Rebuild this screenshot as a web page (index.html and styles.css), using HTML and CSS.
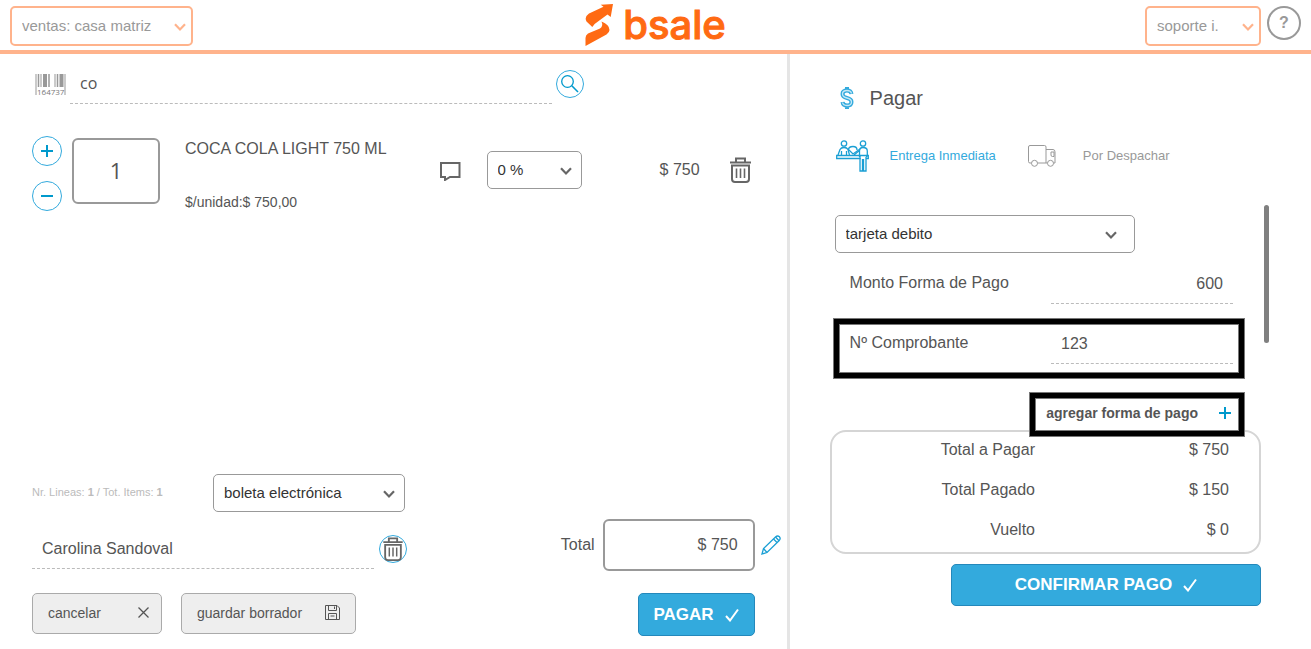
FILE: index.html
```
<!DOCTYPE html>
<html lang="es">
<head>
    <meta charset="UTF-8">
    <meta name="viewport" content="width=device-width, initial-scale=1.0">
    <title>bsale - Ventas</title>
    <link rel="stylesheet" href="styles.css">
</head>
<body>
    <!-- Shared icons -->
    <svg class="sprite" aria-hidden="true">
        <symbol id="chevron" viewBox="0 0 12 8">
            <path d="M1 1.2 L6 6.4 L11 1.2" fill="none" stroke="currentColor" stroke-width="2.2"/>
        </symbol>
        <symbol id="trash" viewBox="0 0 21 26">
            <g fill="none" stroke="currentColor" stroke-width="2">
                <path d="M0 5.5 H21 M6 5 V1.5 H15 V5"/>
                <path d="M2 8.5 H19 V22 Q19 25 16 25 H5 Q2 25 2 22 Z"/>
                <path d="M6.5 11.5 V21 M10.5 11.5 V21 M14.5 11.5 V21" stroke-width="1.6"/>
            </g>
        </symbol>
        <symbol id="check" viewBox="0 0 14 14">
            <path d="M1 8 L5 12.5 L13 1.5" fill="none" stroke="currentColor" stroke-width="2"/>
        </symbol>
        <symbol id="plus" viewBox="0 0 12 12">
            <path d="M6 0 V12 M0 6 H12" fill="none" stroke="currentColor" stroke-width="2"/>
        </symbol>
    </svg>

    <header class="topbar">
        <div class="select select-orange select-branch">
            <select aria-label="Sucursal">
                <option>ventas: casa matriz</option>
            </select>
            <svg class="chevron"><use href="#chevron"/></svg>
        </div>

        <a class="logo" href="#">
            <svg class="logo-mark" viewBox="0 0 28 42" aria-hidden="true">
                <path fill="#ff6a13" d="M28 0 L25.7 13 L22.5 10.500 L15 16 Q9.500 19.500 7.300 23 L1.500 17.500 Q-1 13 4 9.500 L18.500 2.700 L15.700 .7 Z"/>
                <path fill="#ff6a13" d="M16.500 17.500 Q24.500 20.500 24.500 26 Q24.500 28.500 21.500 30.500 L.5 42 V34 Q.5 31 3 29.500 L15 24.500 Q18.500 22 16.500 17.500 Z"/>
            </svg>
            <span class="logo-text">bsale</span>
        </a>

        <div class="topbar-user">
            <div class="select select-orange select-user">
                <select aria-label="Usuario">
                    <option>soporte i.</option>
                </select>
                <svg class="chevron"><use href="#chevron"/></svg>
            </div>
            <button class="help" type="button" aria-label="Ayuda">?</button>
        </div>
    </header>

    <main class="layout">
        <!-- Sale detail -->
        <section class="sale">
            <div class="search">
                <svg class="barcode" viewBox="0 0 31 22" aria-hidden="true">
                    <path stroke="#bbb" stroke-width="1.500" d="M1 0 V21 M6 0 V13 M20 0 V13 M30 0 V21"/>
                    <path stroke="#999" stroke-width="1.500" d="M3.500 0 V13 M14 0 V13 M22.500 0 V13"/>
                    <path stroke="#999" stroke-width="4" d="M10 0 V13 M26.500 0 V13"/>
                    <text x="2" y="21" font-size="8" fill="#777">164737</text>
                </svg>
                <input class="line-input search-input" type="text" value="co" aria-label="Buscar producto">
                <button class="round round-small" type="button" aria-label="Buscar">
                    <svg width="18" height="18" viewBox="0 0 18 18" fill="none" stroke="currentColor">
                        <circle cx="6.500" cy="6.500" r="5.800" stroke-width="1.300"/>
                        <path d="M10.800 10.800 L17 17" stroke-width="1.600"/>
                    </svg>
                </button>
            </div>

            <div class="item">
                <div class="stepper">
                    <button class="round" type="button" aria-label="Sumar">
                        <svg width="12" height="12"><use href="#plus"/></svg>
                    </button>
                    <button class="round" type="button" aria-label="Restar">
                        <svg width="12" height="12" viewBox="0 0 12 12"><path d="M0 6 H12" stroke="currentColor" stroke-width="2"/></svg>
                    </button>
                </div>
                <input class="quantity" type="text" value="1" aria-label="Cantidad">
                <div class="item-text">
                    <span class="item-name">COCA COLA LIGHT 750 ML</span>
                    <span class="item-unit">$/unidad:$ 750,00</span>
                </div>
                <div class="item-actions">
                    <button class="icon-button comment" type="button" aria-label="Comentario">
                        <svg width="21" height="21" viewBox="0 0 21 21">
                            <path d="M1 3 H19.500 V17 H10 L5 20 V17 H1 Z" fill="none" stroke="currentColor" stroke-width="2"/>
                        </svg>
                    </button>
                    <div class="select select-discount">
                        <select aria-label="Descuento">
                            <option>0 %</option>
                        </select>
                        <svg class="chevron"><use href="#chevron"/></svg>
                    </div>
                    <span class="item-price">$ 750</span>
                    <button class="icon-button" type="button" aria-label="Eliminar">
                        <svg width="21" height="26"><use href="#trash"/></svg>
                    </button>
                </div>
            </div>

            <div class="sale-footer">
                <div class="document">
                    <span class="counter">Nr. Lineas: <b>1</b> / Tot. Items: <b>1</b></span>
                    <div class="select select-document">
                        <select aria-label="Tipo de documento">
                            <option>boleta electrónica</option>
                        </select>
                        <svg class="chevron"><use href="#chevron"/></svg>
                    </div>
                </div>

                <div class="customer-row">
                    <div class="customer">
                        <input class="line-input customer-input" type="text" value="Carolina Sandoval" aria-label="Cliente">
                        <button class="round round-small customer-remove" type="button" aria-label="Quitar cliente">
                            <svg width="20" height="24"><use href="#trash"/></svg>
                        </button>
                    </div>
                    <div class="total">
                        <label for="total">Total</label>
                        <input id="total" type="text" value="$ 750">
                        <button class="icon-button edit" type="button" aria-label="Editar total">
                            <svg width="20" height="20" viewBox="0 0 20 20" fill="none" stroke="currentColor" stroke-width="1.300">
                                <path d="M1 19 L2.500 13.500 L14.500 2 Q16.500 .200 18.500 1.800 Q20 3.800 18 5.800 L6 17.500 Z"/>
                                <path d="M2.500 13.500 L6 17.500 M12.500 4 L16 7.500 M14.500 2 L18 5.800"/>
                            </svg>
                        </button>
                    </div>
                </div>

                <div class="buttons">
                    <button class="btn btn-gray btn-cancel" type="button">
                        cancelar
                        <svg width="11" height="11" viewBox="0 0 11 11"><path d="M.5 .5 L10.500 10.500 M10.500 .5 L.5 10.500" stroke="currentColor" stroke-width="1.300"/></svg>
                    </button>
                    <button class="btn btn-gray btn-draft" type="button">
                        guardar borrador
                        <svg width="15" height="15" viewBox="0 0 15 15" fill="none" stroke="currentColor">
                            <path d="M.5 .5 H12 L14.500 3 V14.500 H.5 Z M3.500 .5 V5.500 H11.500 V.5 M9.500 1.500 V4 M3.500 14.500 V8.500 H11.500 V14.500 M5.500 11 H9.500"/>
                        </svg>
                    </button>
                    <button class="btn btn-blue btn-pay" type="button">
                        PAGAR
                        <svg width="14" height="14"><use href="#check"/></svg>
                    </button>
                </div>
            </div>
        </section>

        <!-- Payment panel -->
        <section class="payment">
            <h1 class="payment-title">
                <svg width="16" height="24" viewBox="0 0 16 24" fill="none" aria-hidden="true">
                    <path d="M12.500 8 Q12 4.500 8 4.500 Q3.500 4.500 3.500 8 Q3.500 11 8 12 Q12.500 13 12.500 16 Q12.500 19.500 8 19.500 Q4 19.500 3.500 16 M8 1 V3 M8 20 V23" stroke="#33aadd" stroke-width="4"/>
                    <path d="M12.500 7.500 Q12 4.500 8 4.500 Q3.500 4.500 3.500 8 Q3.500 11 8 12 Q12.500 13 12.500 16 Q12.500 19.500 8 19.500 Q4 19.500 3.500 16.500" stroke="#c5e8f6" stroke-width="1.300"/>
                </svg>
                Pagar
            </h1>

            <div class="delivery">
                <button class="delivery-option active" type="button">
                    <svg width="33" height="32" viewBox="0 0 33 32" fill="none" stroke="#1a9fd4" stroke-width="1.300" aria-hidden="true">
                        <circle cx="8" cy="3.500" r="2.700"/>
                        <path d="M2 15 L4 9.500 Q5 7.500 8 7.500 Q11 7.500 12 9.500 L13.500 15 M5.500 15 V11 M10.500 15 V11"/>
                        <path d="M12.500 10 Q12.500 6.500 17 6.500 Q21 6.500 21 10 M13 10 L17 14 L24 9"/>
                        <path d="M.7 15.500 H24 V18.500 H.7 Z M24 15.500 H32.300 V18.500 H30"/>
                        <circle cx="27" cy="3.500" r="2.700"/>
                        <path d="M23.500 17 V11 Q23.500 7.500 27 7.500 Q31.300 7.500 31.300 11 V16 L30 17 M24 18 V31 H26.500 V19 M27.500 19 V31 H30 V17 M24 10 L18 15"/>
                    </svg>
                    Entrega Inmediata
                </button>
                <button class="delivery-option" type="button">
                    <svg width="28" height="22" viewBox="0 0 28 22" fill="none" stroke="#999" aria-hidden="true">
                        <path d="M3.500 18 H2 Q.5 18 .5 16.500 V2 Q.5 .5 2 .5 H16.500 Q18 .5 18 2 V18 H9.500 M18 4.500 H25 Q27 4.500 27 7 V18 H25.500 M18 18 H19.500 M23 7 H26 V11.500 H24.500 Q23 11.500 23 10 Z"/>
                        <circle cx="6.500" cy="18.300" r="3"/>
                        <circle cx="22.500" cy="18.300" r="3"/>
                    </svg>
                    Por Despachar
                </button>
            </div>

            <div class="methods">
                <span class="scrollbar"></span>
                <div class="select select-method">
                    <select aria-label="Forma de pago">
                        <option>tarjeta debito</option>
                    </select>
                    <svg class="chevron"><use href="#chevron"/></svg>
                </div>
                <div class="field">
                    <label for="amount">Monto Forma de Pago</label>
                    <input id="amount" class="line-input amount" type="text" value="600">
                </div>
                <div class="field highlight">
                    <label for="voucher">Nº Comprobante</label>
                    <input id="voucher" class="line-input" type="text" value="123">
                </div>
                <button class="add-method highlight" type="button">
                    agregar forma de pago
                    <svg width="12" height="12"><use href="#plus"/></svg>
                </button>
            </div>

            <dl class="totals">
                <dt>Total a Pagar</dt>
                <dd>$ 750</dd>
                <dt>Total Pagado</dt>
                <dd>$ 150</dd>
                <dt>Vuelto</dt>
                <dd>$ 0</dd>
            </dl>

            <button class="btn btn-blue btn-confirm" type="button">
                CONFIRMAR PAGO
                <svg width="14" height="14"><use href="#check"/></svg>
            </button>
        </section>
    </main>
</body>
</html>
```
FILE: styles.css
```
/* Base */
* {
    box-sizing: border-box;
}

body {
    margin: 0;
    font-family: "Liberation Sans", Arial, sans-serif;
    font-size: 16px;
    line-height: 20px;
    color: #555;
    background-color: #fff;
}

button, input, select {
    font: inherit;
    color: inherit;
    margin: 0;
}

button {
    padding: 0;
    border: none;
    background: none;
    cursor: pointer;
}

svg {
    display: block;
    flex: none;
}

.sprite {
    position: absolute;
    width: 0;
    height: 0;
}

/* Selects */
.select {
    position: relative;
    flex: none;
}

.select select {
    width: 100%;
    height: 38px;
    padding: 0 32px 0 10px;
    border: 1px solid #999;
    border-radius: 5px;
    background-color: #fff;
    color: #333;
    font-size: 15px;
    appearance: none;
}

.select .chevron {
    position: absolute;
    top: 50%;
    right: 10px;
    width: 12px;
    height: 8px;
    margin-top: -3px;
    color: #666;
    pointer-events: none;
}

.select-orange select {
    height: 40px;
    border: 2px solid #ffb38c;
    color: #999;
}

.select-orange .chevron {
    right: 7px;
    color: #ffb38c;
}

.select-branch {
    width: 183px;
}

.select-user {
    width: 116px;
}

.select-discount {
    width: 95px;
}

.select-document {
    width: 192px;
}

.select-method {
    width: 300px;
    margin-left: 5px;
}

.select-method .chevron {
    right: 18px;
}

/* Top bar */
.topbar {
    display: grid;
    grid-template-columns: 1fr auto 1fr;
    padding: 6px 10px 4px;
    border-bottom: 4px solid #ffb38c;
}

.logo {
    display: flex;
    align-items: center;
    gap: 10px;
    height: 38px;
    color: #ff6a13;
    text-decoration: none;
}

.logo-mark {
    width: 28px;
    height: 42px;
}

.logo-text {
    font-family: Inter, sans-serif;
    font-size: 40px;
    font-weight: 500;
    line-height: 40px;
    -webkit-text-stroke: 1px #ff6a13;
}

.topbar-user {
    display: flex;
    justify-content: flex-end;
    gap: 6px;
}

.help {
    width: 34px;
    height: 34px;
    border: 2px solid #999;
    border-radius: 50%;
    color: #999;
    font-weight: bold;
}

/* Layout */
.layout {
    display: grid;
    grid-template-columns: 60% 40%;
    min-height: calc(100vh - 54px);
}

.sale {
    display: flex;
    flex-direction: column;
    padding: 16px 6px 13px 32px;
}

.line-input {
    min-width: 0;
    padding: 0 10px;
    border: none;
    border-bottom: 1px dashed #bbb;
    background: none;
}

.round {
    display: flex;
    align-items: center;
    justify-content: center;
    flex: none;
    width: 30px;
    height: 30px;
    border: 1px solid #33aadd;
    border-radius: 50%;
    color: #0099cc;
}

.round-small {
    width: 28px;
    height: 28px;
}

.icon-button {
    color: #666;
}

/* Search */
.search {
    display: flex;
    gap: 4px;
    margin-right: 197px;
    padding-left: 3px;
}

.barcode {
    width: 31px;
    height: 22px;
    margin-top: 4px;
    font-family: "Open Sans", sans-serif;
}

.search-input {
    flex: 1;
    height: 34px;
    padding-bottom: 7px;
    font-family: "Open Sans", sans-serif;
}

/* Sale item */
.item {
    display: flex;
    margin: 32px 30px 0 0;
}

.stepper {
    display: flex;
    flex-direction: column;
    gap: 15px;
}

.quantity {
    width: 88px;
    height: 66px;
    margin: 2px 25px 0 10px;
    padding: 0 0 2px;
    border: 2px solid #999;
    border-radius: 6px;
    font-family: "Open Sans", sans-serif;
    font-size: 22px;
    text-align: center;
}

.item-text {
    display: flex;
    flex: 1;
    flex-direction: column;
    gap: 33px;
    padding-top: 3px;
}

.item-unit {
    font-size: 14px;
}

.item-actions {
    display: flex;
    align-items: center;
    height: 68px;
}

.comment {
    margin-right: 26px;
}

.item-price {
    width: 118px;
    margin-right: 30px;
    text-align: right;
}

/* Sale footer */
.sale-footer {
    margin-top: auto;
}

.document {
    display: flex;
    align-items: center;
}

.counter {
    width: 181px;
    padding-bottom: 2px;
    font-size: 11px;
    color: #bbb;
}

.customer-row {
    display: flex;
    justify-content: space-between;
    margin-top: 7px;
}

.customer {
    display: flex;
    align-items: center;
    gap: 5px;
    height: 52px;
    padding-top: 8px;
}

.customer-input {
    width: 342px;
    height: 40px;
}

.customer-remove {
    color: #666;
}

.total {
    display: flex;
    align-items: center;
}

.total input {
    width: 152px;
    height: 52px;
    margin: 0 6px 0 8px;
    padding: 0 15px;
    border: 2px solid #999;
    border-radius: 6px;
    text-align: right;
}

.edit {
    color: #1a9fd4;
}

.buttons {
    display: flex;
    gap: 19px;
    margin: 22px 26px 0 0;
}

.btn {
    display: flex;
    align-items: center;
    height: 42px;
    border-radius: 5px;
}

.btn-gray {
    justify-content: space-between;
    height: 41px;
    padding: 0 12px 2px 15px;
    border: 1px solid #aaa;
    background-color: #eee;
    font-size: 14px;
}

.btn-cancel {
    width: 130px;
}

.btn-draft {
    width: 175px;
    padding-right: 15px;
}

.btn-blue {
    justify-content: center;
    gap: 11px;
    border: 1px solid #2488bb;
    background-color: #33aadd;
    color: #fff;
    font-size: 17px;
    font-weight: bold;
}

.btn-pay {
    width: 117px;
    height: 43px;
    margin-left: auto;
}

/* Payment */
.payment {
    display: flex;
    flex-direction: column;
    padding: 31px 50px 13px 40px;
    border-left: 3px solid #e5e5e5;
}

.payment-title {
    display: flex;
    align-items: center;
    gap: 15px;
    height: 26px;
    margin: 0;
    padding-left: 9px;
    font-size: 20px;
    font-weight: normal;
}

.delivery {
    display: flex;
    gap: 32px;
    margin-top: 29px;
    padding-left: 6px;
}

.delivery-option {
    display: flex;
    align-items: center;
    gap: 27px;
    height: 32px;
    color: #999;
    font-size: 13px;
}

.delivery-option.active {
    gap: 21px;
    color: #33aadd;
}

.methods {
    display: flex;
    flex-direction: column;
    position: relative;
    margin-top: 33px;
    padding-top: 10px;
}

.scrollbar {
    position: absolute;
    top: 0;
    right: -8px;
    width: 5px;
    height: 138px;
    border-radius: 3px;
    background-color: #808080;
}

.field {
    display: flex;
    justify-content: space-between;
    margin-top: 11px;
    padding: 0 28px 0 20px;
}

.field label {
    padding-top: 9px;
}

.field .line-input {
    width: 182px;
    height: 40px;
}

.field .amount {
    text-align: right;
}

.highlight {
    border: 5px solid #000;
    outline: 1px solid #777;
    box-shadow: inset 0 0 0 1px #777;
}

.field.highlight {
    margin: 15px 17px 0 4px;
    padding: 0 6px 9px 11px;
}

.add-method {
    display: flex;
    align-items: center;
    gap: 21px;
    align-self: flex-end;
    position: relative;
    z-index: 1;
    height: 43px;
    margin: 15px 17px 0 0;
    padding: 0 8px 4px 11px;
    background-color: #fff;
    font-size: 14px;
    font-weight: bold;
}

.add-method svg {
    color: #0099cc;
}

.totals {
    display: grid;
    grid-template-columns: 1fr 194px;
    row-gap: 20px;
    margin: -6px 0 0;
    padding: 8px 30px 12px 0;
    border: 2px solid #d5d5d5;
    border-radius: 16px;
    text-align: right;
}

.totals dd {
    margin: 0;
}

.btn-confirm {
    align-self: flex-end;
    width: 310px;
    margin-top: 10px;
}
```
